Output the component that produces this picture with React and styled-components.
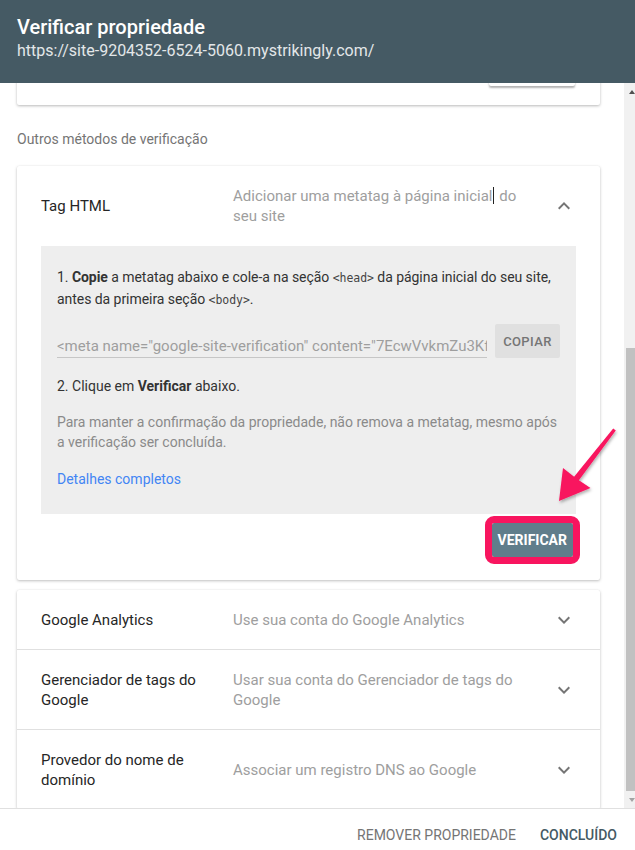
import React from 'react'
import styled, { createGlobalStyle } from 'styled-components'

const GlobalStyle = createGlobalStyle`
  html, body {
    margin: 0;
    padding: 0;
    background: #fff;
  }
  body {
    font-family: Roboto, "Liberation Sans", sans-serif;
    -webkit-font-smoothing: antialiased;
  }
`

const PINK = '#f8155f'

const otherMethods = [
  { name: 'Google Analytics', desc: 'Use sua conta do Google Analytics' },
  { name: 'Gerenciador de tags do Google', desc: 'Usar sua conta do Gerenciador de tags do Google' },
  { name: 'Provedor do nome de domínio', desc: 'Associar um registro DNS ao Google' },
]

const Chevron = ({ up }) => (
  <ChevronBox>
    <svg width="24" height="24" viewBox="0 0 24 24" fill="#757575">
      {up ? (
        <path d="M7.41 15.41L12 10.83l4.59 4.58L18 14l-6-6-6 6z" />
      ) : (
        <path d="M7.41 8.59L12 13.17l4.59-4.58L18 10l-6 6-6-6 1.41-1.41z" />
      )}
    </svg>
  </ChevronBox>
)

const Pointer = () => (
  <PointerSvg width="75" height="90" viewBox="0 0 75 90">
    <defs>
      <filter id="arrowShadow" x="-30%" y="-30%" width="160%" height="160%">
        <feDropShadow dx="1" dy="2" stdDeviation="1.5" floodColor="#000" floodOpacity="0.3" />
      </filter>
    </defs>
    <polygon
      fill={PINK}
      filter="url(#arrowShadow)"
      points="63.2,8.5 65.8,10.5 28.9,60.3 40.5,68 9,81 13,48 24.1,56.7"
    />
  </PointerSvg>
)

export default function App() {
  return (
    <Screen>
      <GlobalStyle />
      <Header>
        <Title>Verificar propriedade</Title>
        <Url>https://site-9204352-6524-5060.mystrikingly.com/</Url>
      </Header>

      <Body>
        <Content>
          <PrevCard>
            <RaisedButton />
          </PrevCard>

          <SectionLabel>Outros métodos de verificação</SectionLabel>

          <Card>
            <MethodRow $open>
              <MethodName>Tag HTML</MethodName>
              <MethodDesc>
                Adicionar uma metatag à página inicial<Caret /> do seu site
              </MethodDesc>
              <Chevron up />
            </MethodRow>

            <Instructions>
              <Step>
                1. <b>Copie</b> a metatag abaixo e cole-a na seção <Code>&lt;head&gt;</Code> da página
                inicial do seu site, antes da primeira seção <Code>&lt;body&gt;</Code>.
              </Step>
              <MetaRow>
                <MetaField>
                  &lt;meta name="google-site-verification" content="7EcwVvkmZu3Kf8Qp2x" /&gt;
                </MetaField>
                <CopyButton>COPIAR</CopyButton>
              </MetaRow>
              <StepTwo>
                2. Clique em <b>Verificar</b> abaixo.
              </StepTwo>
              <Note>
                Para manter a confirmação da propriedade, não remova a metatag, mesmo após a
                verificação ser concluída.
              </Note>
              <DetailsLink>Detalhes completos</DetailsLink>
            </Instructions>

            <ActionRow>
              <VerifyButton>VERIFICAR</VerifyButton>
            </ActionRow>
          </Card>

          <Card $gap>
            {otherMethods.map((m, i) => (
              <MethodRow key={m.name} $divider={i > 0}>
                <MethodName>{m.name}</MethodName>
                <MethodDesc>{m.desc}</MethodDesc>
                <Chevron />
              </MethodRow>
            ))}
          </Card>
        </Content>

        <Scrollbar>
          <ScrollArrow $dir="up" />
          <Track>
            <Thumb />
          </Track>
          <ScrollArrow $dir="down" />
        </Scrollbar>
      </Body>

      <Footer>
        <FooterButton>REMOVER PROPRIEDADE</FooterButton>
        <FooterButton $primary>CONCLUÍDO</FooterButton>
      </Footer>

      <Pointer />
    </Screen>
  )
}

const Screen = styled.div`
  position: relative;
  width: 635px;
  height: 850px;
  display: flex;
  flex-direction: column;
  overflow: hidden;
  background: #fff;
`

const Header = styled.header`
  flex-shrink: 0;
  height: 83px;
  box-sizing: border-box;
  padding: 15px 17px 0;
  background: #455a64;
  color: #fff;
`

const Title = styled.h1`
  margin: 0;
  font-size: 20px;
  font-weight: 500;
  line-height: 24px;
`

const Url = styled.div`
  margin-top: 1px;
  font-size: 16px;
  line-height: 22px;
  color: #e3e7e9;
`

const Body = styled.div`
  flex: 1;
  display: flex;
  min-height: 0;
`

const Content = styled.main`
  flex: 1;
  overflow: hidden;
  padding: 0 24px 0 17px;
`

const PrevCard = styled.div`
  margin-top: -33px;
  padding: 0 25px 19px 0;
  display: flex;
  justify-content: flex-end;
  background: #fff;
  box-shadow: 0 1px 3px rgba(0, 0, 0, 0.28);
  border-radius: 2px;
`

const RaisedButton = styled.div`
  width: 86px;
  height: 36px;
  background: #fff;
  border-radius: 2px;
  box-shadow: 0 2px 2px rgba(0, 0, 0, 0.3);
`

const SectionLabel = styled.div`
  margin: 24px 0 17px;
  font-size: 14px;
  line-height: 20px;
  color: #757575;
`

const Card = styled.section`
  margin-top: ${p => (p.$gap ? '10px' : '0')};
  background: #fff;
  border-radius: 2px;
  box-shadow: 0 1px 3px rgba(0, 0, 0, 0.25), 0 0 1px rgba(0, 0, 0, 0.08);
`

const MethodRow = styled.div`
  display: flex;
  align-items: center;
  padding: 20px 24px ${p => (p.$open ? '20px' : '19px')};
  border-top: ${p => (p.$divider ? '1px solid #e0e0e0' : 'none')};
`

const MethodName = styled.div`
  width: 176px;
  margin-right: 16px;
  font-size: 15px;
  line-height: 20px;
  color: #262626;
`

const MethodDesc = styled.div`
  width: 300px;
  font-size: 15px;
  line-height: 20px;
  color: #9e9e9e;
`

const Caret = styled.span`
  display: inline-block;
  width: 1px;
  height: 17px;
  margin: 0 1px;
  vertical-align: -3px;
  background: #222;
`

const ChevronBox = styled.div`
  margin-left: auto;
  width: 24px;
  height: 20px;
  display: flex;
  align-items: center;
  justify-content: center;

  & > svg {
    flex-shrink: 0;
    margin: -2px 0;
  }
`

const Instructions = styled.div`
  margin: 0 24px;
  padding: 20px 16px 25px;
  background: #eeeeee;
  font-size: 14px;
  color: #333;
`

const Step = styled.p`
  margin: 0;
  line-height: 22px;
  letter-spacing: -0.05px;

  & b {
    font-weight: 700;
  }
`

const Code = styled.code`
  font-family: "DejaVu Sans Mono", "Liberation Mono", monospace;
  font-size: 11.5px;
  line-height: 1;
  color: #444;
`

const MetaRow = styled.div`
  margin-top: 14px;
  display: flex;
  align-items: flex-end;
`

const MetaField = styled.div`
  flex: 1;
  min-width: 0;
  overflow: hidden;
  white-space: nowrap;
  padding-bottom: 1px;
  border-bottom: 1px solid #c6c6c6;
  font-size: 15px;
  line-height: 20px;
  color: #9e9e9e;
`

const CopyButton = styled.div`
  margin-left: 8px;
  width: 65px;
  height: 34px;
  flex-shrink: 0;
  display: grid;
  place-items: center;
  border-radius: 2px;
  background: #e0e0e0;
  color: #757575;
  font-size: 13px;
  font-weight: 500;
  letter-spacing: 0.4px;
`

const StepTwo = styled.p`
  margin: 18px 0 0;
  line-height: 20px;

  & b {
    font-weight: 700;
  }
`

const Note = styled.p`
  margin: 16px 0 0;
  line-height: 20px;
  color: #8a8a8a;
`

const DetailsLink = styled.a`
  display: block;
  margin-top: 17px;
  line-height: 20px;
  color: #4285f4;
  text-decoration: none;
`

const ActionRow = styled.div`
  display: flex;
  justify-content: flex-end;
  padding: 9px 27px 23px;
`

const VerifyButton = styled.button`
  height: 34px;
  padding: 0 6px;
  border: none;
  border-radius: 2px;
  background: #607d8b;
  color: #fff;
  font-family: Roboto, "Liberation Sans", sans-serif;
  font-size: 14px;
  font-weight: 700;
  outline: 7px solid ${PINK};
  outline-offset: 0;
`

const Scrollbar = styled.div`
  width: 11px;
  flex-shrink: 0;
  display: flex;
  flex-direction: column;
  background: #f1f1f1;
`

const ScrollArrow = styled.div`
  height: 17px;
  flex-shrink: 0;
  display: flex;
  align-items: center;
  padding-left: 5px;

  &::before {
    content: '';
    width: 0;
    height: 0;
    border-left: 3.5px solid transparent;
    border-right: 3.5px solid transparent;
    ${p =>
      p.$dir === 'up'
        ? 'border-bottom: 4px solid #505050;'
        : 'border-top: 4px solid #a3a3a3;'}
  }
`

const Track = styled.div`
  flex: 1;
  display: flex;
  flex-direction: column;
  padding: 248px 0 0 2px;
`

const Thumb = styled.div`
  flex: 1;
  background: #c1c1c1;
`

const Footer = styled.footer`
  flex-shrink: 0;
  height: 42px;
  box-sizing: border-box;
  padding: 16px 18px 0;
  border-top: 1px solid #e0e0e0;
  display: flex;
  justify-content: flex-end;
  gap: 24px;
  background: #fff;
`

const FooterButton = styled.div`
  font-size: 14px;
  line-height: 20px;
  font-weight: ${p => (p.$primary ? 500 : 400)};
  color: ${p => (p.$primary ? '#455a64' : '#757575')};
`

const PointerSvg = styled.svg`
  position: absolute;
  left: 550px;
  top: 420px;
  pointer-events: none;
`
